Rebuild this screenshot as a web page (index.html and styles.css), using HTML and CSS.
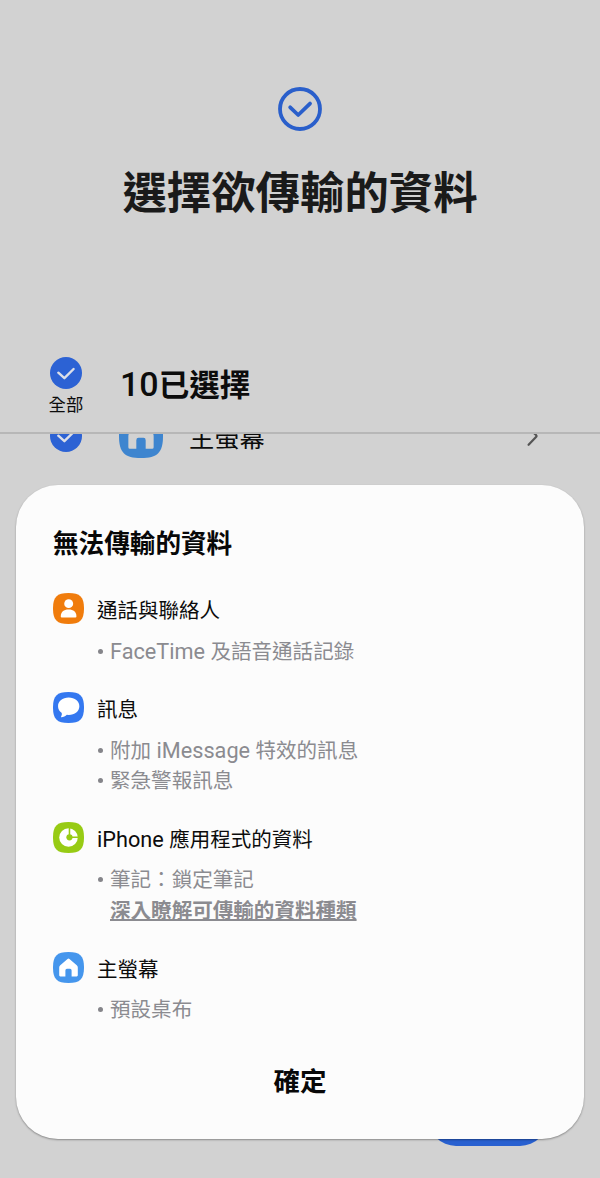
FILE: index.html
```html
<!DOCTYPE html>
<html lang="zh-Hant">
<head>
  <meta charset="UTF-8" />
  <meta name="viewport" content="width=device-width, initial-scale=1.0"/>
  <title>選擇欲傳輸的資料</title>
  <link rel="stylesheet" href="styles.css">
</head>
<body>
  <div class="screen">
    <header class="page-header">
      <svg class="header-icon" viewBox="0 0 44 44">
        <circle cx="22" cy="22" r="20" />
        <path d="M12.2 20.3 L20.2 28 L32 16.6" />
      </svg>
      <h1>選擇欲傳輸的資料</h1>
    </header>

    <div class="select-all">
      <div class="all-check">
        <svg class="check" viewBox="0 0 32 32">
          <circle cx="16" cy="16" r="16" />
          <path d="M8.3 15.7 L14.4 21.2 L23.6 12" />
        </svg>
        <span>全部</span>
      </div>
      <div class="count"><span class="num">10</span>已選擇</div>
    </div>

    <div class="list">
      <div class="list-row">
        <svg class="check" viewBox="0 0 32 32">
          <circle cx="16" cy="16" r="16" />
          <path d="M8.3 15.7 L14.4 21.2 L23.6 12" />
        </svg>
        <svg class="app-icon" viewBox="0 0 32 32">
          <path fill="#3e85cf" d="M16 0C28 0 32 4 32 16S28 32 16 32 0 28 0 16 4 0 16 0Z" />
          <path fill="#d2d2d2" d="M15 7.2Q16 6.4 17 7.2L24.2 13.6Q25.2 14.6 25.2 16V24.1Q25.2 25.2 24.1 25.2H19.4V19Q19.4 17.3 17.8 17.3H14.2Q12.6 17.3 12.6 19V25.2H7.9Q6.8 25.2 6.8 24.1V16Q6.8 14.6 7.8 13.6Z" />
        </svg>
        <span class="row-label">主螢幕</span>
        <svg class="chevron" viewBox="0 0 12 20">
          <path d="M2 2.5 L9 9 Q10 10 9 11 L1.6 18.8" />
        </svg>
      </div>
    </div>

    <button class="next-btn" aria-label="next"></button>

    <div class="dialog">
      <h2>無法傳輸的資料</h2>

      <section class="item">
        <div class="item-head">
          <svg class="item-icon" viewBox="0 0 32 32">
            <path fill="#f07c0c" d="M16 0C28 0 32 4 32 16S28 32 16 32 0 28 0 16 4 0 16 0Z" />
            <circle cx="16.2" cy="11" r="4.6" fill="#fff" />
            <path fill="#fff" d="M8 24.2C8 19.5 11 17 16.1 17S24.2 19.5 24.2 24.2Q24.2 25.2 23.2 25.2H9Q8 25.2 8 24.2Z" />
          </svg>
          <h3>通話與聯絡人</h3>
        </div>
        <ul>
          <li><span class="latin">FaceTime </span>及語音通話記錄</li>
        </ul>
      </section>

      <section class="item">
        <div class="item-head">
          <svg class="item-icon" viewBox="0 0 32 32">
            <path fill="#3478f0" d="M16 0C28 0 32 4 32 16S28 32 16 32 0 28 0 16 4 0 16 0Z" />
            <path fill="#fff" d="M16.2 5.8C22.6 5.8 27.2 9.6 27.2 14.7S22.6 23.7 16.2 23.7Q15.2 23.7 14.3 23.6C12.8 25 10.7 25.9 8.7 26.1Q8 26.1 8.3 25.5C9.2 24 9.4 22.6 8.8 21.5C6.6 19.9 5.2 17.5 5.2 14.7C5.2 9.6 9.8 5.8 16.2 5.8Z" />
          </svg>
          <h3>訊息</h3>
        </div>
        <ul>
          <li>附加<span class="latin"> iMessage </span>特效的訊息</li>
          <li>緊急警報訊息</li>
        </ul>
      </section>

      <section class="item">
        <div class="item-head">
          <svg class="item-icon" viewBox="0 0 32 32">
            <path fill="#97cb14" d="M16 0C28 0 32 4 32 16S28 32 16 32 0 28 0 16 4 0 16 0Z" />
            <circle cx="16" cy="16" r="9.6" fill="#fff" />
            <path fill="none" stroke="#97cb14" stroke-width="1.6" d="M17 5V15.7H27" />
            <circle cx="17" cy="15.8" r="3.2" fill="#97cb14" />
          </svg>
          <h3><span class="latin">iPhone </span>應用程式的資料</h3>
        </div>
        <ul>
          <li>筆記：鎖定筆記</li>
        </ul>
        <a class="more-link" href="#">深入瞭解可傳輸的資料種類</a>
      </section>

      <section class="item">
        <div class="item-head">
          <svg class="item-icon" viewBox="0 0 32 32">
            <path fill="#4596ed" d="M16 0C28 0 32 4 32 16S28 32 16 32 0 28 0 16 4 0 16 0Z" />
            <path fill="#fff" d="M15 7.2Q16 6.4 17 7.2L24.5 13.6Q25.6 14.6 25.6 16V24.1Q25.6 25.2 24.5 25.2H19.2V19Q19.2 17.3 17.6 17.3H14.4Q12.8 17.3 12.8 19V25.2H7.5Q6.4 25.2 6.4 24.1V16Q6.4 14.6 7.5 13.6Z" />
          </svg>
          <h3>主螢幕</h3>
        </div>
        <ul>
          <li>預設桌布</li>
        </ul>
      </section>

      <button class="ok-btn">確定</button>
    </div>
  </div>
</body>
</html>
```
FILE: styles.css
```css
* {
  box-sizing: border-box;
  margin: 0;
  padding: 0;
}

body {
  background: #d2d2d2;
  color: #0c0c0c;
  font-family: Roboto, 'Noto Sans CJK TC', sans-serif;
}

.screen {
  position: relative;
  height: 1178px;
  overflow: hidden;
}

.page-header {
  height: 340px;
  padding-top: 87px;
  display: flex;
  flex-direction: column;
  align-items: center;
}

.header-icon {
  width: 44px;
  height: 44px;
  fill: none;
  stroke: #2a5fcb;
  stroke-width: 3.8;
  stroke-linecap: round;
  stroke-linejoin: round;
}

h1 {
  margin-top: 33px;
  font-size: 44.4px;
  line-height: 60px;
  font-weight: 700;
  color: #1a1a1a;
}

.select-all {
  height: 94px;
  padding: 17px 0 0 48px;
  display: flex;
  border-bottom: 2px solid #b7b7b7;
}

.all-check {
  width: 36px;
  display: flex;
  flex-direction: column;
  align-items: center;
}

.all-check span {
  margin-top: 4px;
  font-size: 17.4px;
  line-height: 24px;
}

.check {
  width: 32px;
  height: 32px;
  flex-shrink: 0;
  fill: #2c62d4;
}

.check path {
  fill: none;
  stroke: #dcdfe8;
  stroke-width: 2.4;
  stroke-linecap: round;
  stroke-linejoin: round;
}

.count {
  margin: 6px 0 0 36px;
  font-size: 30.5px;
  line-height: 42px;
  font-weight: 700;
}

.count .num {
  font-size: 34px;
  font-weight: 500;
}

/* the first row is scrolled part way under the header */
.list {
  height: 50px;
  overflow: hidden;
}

.list-row {
  height: 44px;
  margin-top: -20px;
  padding: 0 61px 0 50px;
  display: flex;
  align-items: center;
}

.app-icon {
  width: 44px;
  height: 44px;
  margin-left: 37px;
}

.row-label {
  margin: 5px 0 0 26px;
  font-size: 25.2px;
  line-height: 36px;
}

.chevron {
  width: 12px;
  height: 20px;
  margin-left: auto;
  fill: none;
  stroke: #555;
  stroke-width: 2.2;
  stroke-linecap: round;
}

.next-btn {
  position: absolute;
  left: 428px;
  top: 1090px;
  width: 120px;
  height: 56px;
  border: none;
  border-radius: 28px;
  background: #2860d0;
}

.dialog {
  position: absolute;
  left: 16px;
  right: 16px;
  top: 485px;
  height: 654px;
  padding: 41px 37px 0;
  border-radius: 42px;
  background: #fcfcfc;
  box-shadow: 0 1px 2px rgba(0, 0, 0, 0.35);
}

h2 {
  margin-bottom: 30px;
  font-size: 25.6px;
  line-height: 36px;
  font-weight: 700;
  color: #080808;
}

.item {
  margin-bottom: 23px;
}

.item-head {
  height: 32px;
  display: flex;
  gap: 13px;
}

.item-icon {
  width: 31px;
  height: 31px;
  margin-top: 1px;
}

h3 {
  padding-top: 3px;
  font-size: 20.5px;
  line-height: 32px;
  font-weight: 400;
}

.latin {
  font-size: 21.7px;
}

ul {
  margin-top: 12px;
  list-style: none;
}

li,
.more-link {
  display: block;
  height: 31.5px;
  padding-left: 57px;
  font-size: 20.55px;
  line-height: 31.5px;
  color: #8b8b90;
}

li {
  padding-left: 45px;
}

li::before {
  content: "";
  display: inline-block;
  width: 5px;
  height: 5px;
  margin-right: 7px;
  border-radius: 50%;
  vertical-align: 5px;
  background: #85858a;
}

.more-link {
  font-weight: 700;
  text-decoration: underline;
  text-decoration-thickness: 1.5px;
}

.ok-btn {
  display: block;
  width: 100%;
  border: none;
  background: none;
  font-family: inherit;
  font-size: 26.5px;
  line-height: 66px;
  font-weight: 700;
  color: #080808;
}
```
